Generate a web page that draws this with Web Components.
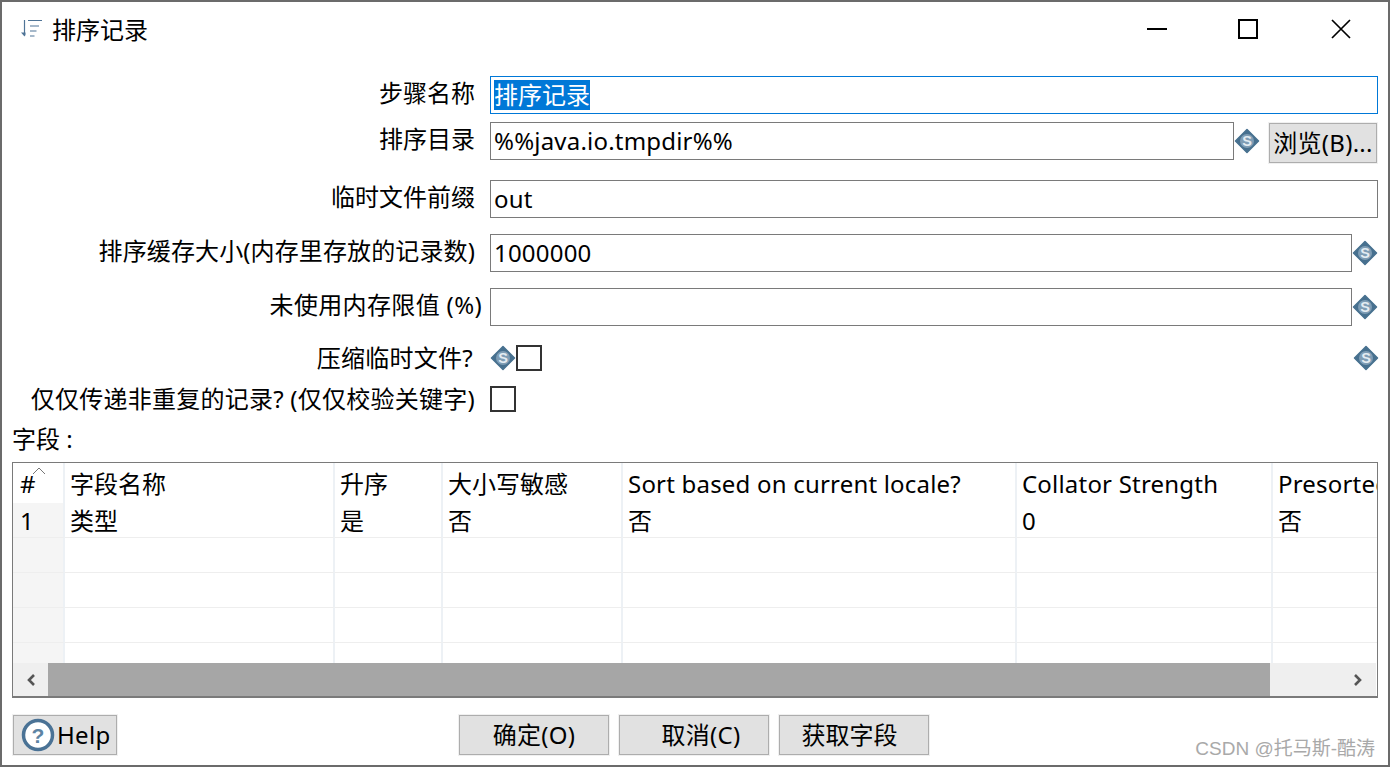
<!DOCTYPE html>
<html lang="zh-CN">
<head>
<meta charset="utf-8">
<title>排序记录</title>
<style>
  html, body { margin: 0; background: #fff; }
  body { font-family: "Noto Sans", "Noto Sans CJK SC", sans-serif; color: #000; }
</style>
</head>
<body>
<sort-dialog>
  <title-bar>排序记录</title-bar>
  <form-row label="步骤名称">
    <text-field focused value="排序记录"></text-field>
  </form-row>
  <form-row label="排序目录" gap="8">
    <text-field value="%%java.io.tmpdir%%"></text-field>
    <var-icon></var-icon>
    <push-button kind="browse">浏览(B)...</push-button>
  </form-row>
  <form-row label="临时文件前缀" gap="17">
    <text-field value="out"></text-field>
  </form-row>
  <form-row label="排序缓存大小(内存里存放的记录数)" gap="16" track="0.12">
    <text-field value="1000000"></text-field>
    <var-icon></var-icon>
  </form-row>
  <form-row label="未使用内存限值 (%)" gap="16" pad="8" track="0.35">
    <text-field></text-field>
    <var-icon></var-icon>
  </form-row>
  <form-row label="压缩临时文件?" gap="19" pad="17" track="0.25" check>
    <var-icon class="lead"></var-icon>
    <check-box></check-box>
    <var-icon class="end"></var-icon>
  </form-row>
  <form-row label="仅仅传递非重复的记录? (仅仅校验关键字)" gap="15" pad="15" track="0.25" check>
    <check-box></check-box>
  </form-row>
  <field-caption>字段 :</field-caption>
  <data-table></data-table>
  <button-bar>
    <push-button kind="help">Help</push-button>
    <push-button>确定(O)</push-button>
    <push-button nudge="14">取消(C)</push-button>
    <push-button nudge="-9">获取字段</push-button>
  </button-bar>
</sort-dialog>

<script>
const UI_FONT = '"Noto Sans", "Noto Sans CJK SC", sans-serif';

function shadow(el, html) {
  el.attachShadow({ mode: "open" }).innerHTML = html;
}

class SortDialog extends HTMLElement {
  constructor() {
    super();
    shadow(this, `
      <style>
        :host {
          display: block;
          position: relative;
          box-sizing: border-box;
          width: 1390px;
          height: 767px;
          border: 2px solid #6b6b6b;
          overflow: hidden;
          background: #fff;
          font-family: ${UI_FONT};
          font-size: 24px;
        }
        .mark {
          position: absolute;
          right: 13px;
          bottom: 3px;
          font: 19px/26px "Liberation Sans", "Noto Sans CJK SC", sans-serif;
          color: #a9a9a9;
          white-space: nowrap;
        }
      </style>
      <slot></slot>
      <div class="mark">CSDN @托马斯-酷涛</div>
    `);
  }
}

class TitleBar extends HTMLElement {
  constructor() {
    super();
    shadow(this, `
      <style>
        :host { display: flex; align-items: center; height: 58px; padding-left: 18px; margin-bottom: 16px; }
        .sort { width: 24px; height: 24px; margin-right: 8px; flex: none; margin-top: -2px; }
        .title { font-size: 24px; line-height: 32px; margin-top: -2px; flex: 1; }
        .win { display: flex; gap: 71px; margin-right: 37px; margin-top: -4px; }
        .win svg { width: 20px; height: 20px; display: block; }
      </style>
      <svg class="sort" viewBox="0 0 24 24" fill="none" stroke="#4f7497" stroke-width="1.2">
        <path d="M4.5 2v14"/>
        <path d="M1 14.5l3.5 4 1-1.5v-2.5z" fill="#4f7497" stroke="none"/>
        <path d="M8 2.5h14M10 8h9M10 13h6.5M10 18h4.5"/>
      </svg>
      <div class="title"><slot></slot></div>
      <div class="win">
        <svg viewBox="0 0 20 20" fill="none" stroke="#000" stroke-width="2"><path d="M0 10h20"/></svg>
        <svg viewBox="0 0 20 20" fill="none" stroke="#000" stroke-width="2"><rect x="1" y="1" width="18" height="18"/></svg>
        <svg viewBox="0 0 20 20" fill="none" stroke="#000" stroke-width="1.7" style="margin-left:2px"><path d="M1 1l18 18M19 1L1 19"/></svg>
      </div>
    `);
  }
}

class FormRow extends HTMLElement {
  constructor() {
    super();
    const pad = this.getAttribute("pad") || "15";
    const gap = this.getAttribute("gap") || "0";
    const track = this.getAttribute("track") || "0";
    const check = this.hasAttribute("check");
    shadow(this, `
      <style>
        :host {
          display: grid;
          grid-template-columns: 488px 1fr;
          margin-top: ${gap}px;
          margin-right: 10px;
          ${check ? "height: 26px;" : ""}
        }
        .label {
          text-align: right;
          padding-right: ${pad}px;
          line-height: 32px;
          letter-spacing: ${track}px;
          margin-top: ${check ? "-3px" : "1px"};
          white-space: nowrap;
          ${check ? "height: 26px;" : ""}
        }
        .fields { display: flex; align-items: flex-start; position: relative; }
      </style>
      <div class="label">${this.getAttribute("label")}</div>
      <div class="fields"><slot></slot></div>
    `);
  }
}

class TextField extends HTMLElement {
  constructor() {
    super();
    const value = this.getAttribute("value") || "";
    const focused = this.hasAttribute("focused");
    shadow(this, `
      <style>
        :host {
          display: block;
          flex: 1;
          box-sizing: border-box;
          height: 38px;
          border: 1px solid ${focused ? "#0078d7" : "#7a7a7a"};
          padding: ${focused ? 3 : 2}px 3px;
          line-height: 32px;
          font-size: 24px;
          white-space: nowrap;
          overflow: hidden;
          letter-spacing: ${focused ? 0 : 0.2}px;
        }
        .sel { background: #0078d7; color: #fff; display: inline-block; line-height: 30px; vertical-align: top; }
      </style>
      <span class="${focused ? "sel" : ""}">${value}</span>
    `);
  }
}

class VarIcon extends HTMLElement {
  constructor() {
    super();
    shadow(this, `
      <style>
        :host { display: block; flex: none; width: 26px; height: 26px; margin-top: 6px; }
        :host(.lead) { position: absolute; left: 0; top: 0; margin: 0; }
        :host(.end) { position: absolute; right: -1px; top: 0; margin: 0; }
        svg { display: block; }
      </style>
      <svg width="26" height="26" viewBox="0 0 26 26">
        <path d="M13 1.5L24.5 13 13 24.5 1.5 13z" fill="#47708f" stroke="#47708f" stroke-width="1.5" stroke-linejoin="round"/>
        <circle cx="13" cy="13" r="7" fill="#7f9db5"/>
        <text x="13" y="18.2" text-anchor="middle" font-family="Liberation Sans, sans-serif" font-weight="700" font-size="14.5" fill="#e4ecf2">S</text>
      </svg>
    `);
  }
}

class CheckBox extends HTMLElement {
  constructor() {
    super();
    shadow(this, `
      <style>
        :host { display: block; box-sizing: border-box; width: 26px; height: 26px; border: 2px solid #333; background: #fff; flex: none; }
      </style>
    `);
  }
  connectedCallback() {
    if (this.previousElementSibling) this.style.marginLeft = "26px";
  }
}

class PushButton extends HTMLElement {
  constructor() {
    super();
    const kind = this.getAttribute("kind");
    const nudge = Number(this.getAttribute("nudge") || 0);
    const help = kind === "help"
      ? `<svg width="34" height="34" viewBox="0 0 34 34">
          <circle cx="17" cy="17" r="14.5" fill="#fff" stroke="#4a7295" stroke-width="3.5"/>
          <text x="17" y="25" text-anchor="middle" font-family="Liberation Sans, sans-serif" font-weight="700" font-size="21" fill="#5d84a4">?</text>
        </svg>`
      : "";
    const width = kind === "help" ? 104 : kind === "browse" ? 108 : 150;
    shadow(this, `
      <style>
        :host {
          display: flex;
          align-items: center;
          justify-content: center;
          flex: none;
          box-sizing: border-box;
          width: ${width}px;
          height: 40px;
          margin-left: ${kind === "browse" ? "9px" : "0"};
          margin-right: ${kind === "browse" ? "1px" : "0"};
          margin-top: ${kind === "browse" ? "1px" : "0"};
          padding-left: ${nudge > 0 ? nudge : 0}px;
          padding-right: ${nudge < 0 ? -nudge : 0}px;
          background: #e1e1e1;
          border: 1px solid #adadad;
          outline: 1px solid #f0f0f0;
          outline-offset: 0;
          font-size: 24px;
          line-height: 32px;
          letter-spacing: ${nudge < 0 ? 0 : 0.3}px;
          white-space: nowrap;
          ${kind === "help" ? "justify-content: flex-start; padding-left: 7px;" : ""}
        }
        svg { display: block; margin-right: 2px; flex: none; }
      </style>
      ${help}<slot></slot>
    `);
  }
}

class FieldCaption extends HTMLElement {
  constructor() {
    super();
    shadow(this, `
      <style>
        :host { display: block; padding-left: 10px; height: 39px; margin-top: 11px; line-height: 32px; font-size: 24px; }
      </style>
      <slot></slot>
    `);
  }
}

class DataTable extends HTMLElement {
  constructor() {
    super();
    const head = ["#", "字段名称", "升序", "大小写敏感", "Sort based on current locale?", "Collator Strength", "Presorted?"];
    const rows = [
      ["1", "类型", "是", "否", "否", "0", "否"],
      ["", "", "", "", "", "", ""],
      ["", "", "", "", "", "", ""],
      ["", "", "", "", "", "", ""],
      ["", "", "", "", "", "", ""],
    ];
    const cell = (t, cls) => `<div class="c ${cls}">${t}</div>`;
    let html = head.map((t, i) => cell(t, "h" + (i === 0 ? " n" : i > 3 ? " latin" : ""))).join("");
    rows.forEach((r) => {
      html += r.map((t, i) => cell(t, i === 0 ? "n idx" : "")).join("");
    });
    shadow(this, `
      <style>
        :host {
          display: block;
          position: relative;
          box-sizing: border-box;
          height: 236px;
          margin: 0 10px;
          border: 1px solid #7a7a7a;
          border-bottom-width: 2px;
          background: #fff;
        }
        .view { height: 200px; overflow: hidden; }
        .grid {
          display: grid;
          grid-template-columns: 52px 270px 108px 180px 394px 256px 200px;
          grid-auto-rows: 35px;
          grid-template-rows: 40px;
          width: 1460px;
        }
        .c {
          box-sizing: border-box;
          padding: 0 0 0 5px;
          border-right: 2px solid #edf1f5;
          border-bottom: 1px solid #eeeeee;
          line-height: 36px;
          white-space: nowrap;
          overflow: hidden;
        }
        .c.h { border-bottom: 0; padding-top: 5px; line-height: 32px; }
        .latin { letter-spacing: 0.2px; }
        .n { padding-left: 7px; }
        .idx { background: #f5f5f5; }
        .caret { position: absolute; left: 19px; top: 4px; width: 14px; height: 8px; }
        .bar { display: flex; height: 33px; background: #efefef; margin-right: 1px; }
        .arrow { width: 35px; display: flex; align-items: center; justify-content: center; flex: none; }
        .arrow.right { width: 106px; padding-left: 69px; box-sizing: border-box; }
        .thumb { flex: 1; background: #a6a6a6; }
      </style>
      <div class="view"><div class="grid">${html}</div></div>
      <svg class="caret" viewBox="0 0 14 8" fill="none" stroke="#777" stroke-width="1"><path d="M1 7l6-6 6 6"/></svg>
      <div class="bar">
        <div class="arrow"><svg width="10" height="12" viewBox="0 0 10 12" fill="none" stroke="#555" stroke-width="2.6"><path d="M8 1L3 6l5 5"/></svg></div>
        <div class="thumb"></div>
        <div class="arrow right"><svg width="10" height="12" viewBox="0 0 10 12" fill="none" stroke="#555" stroke-width="2.6"><path d="M2 1l5 5-5 5"/></svg></div>
      </div>
    `);
  }
}

class ButtonBar extends HTMLElement {
  constructor() {
    super();
    shadow(this, `
      <style>
        :host { display: flex; gap: 10px; padding: 17px 0 0 11px; }
        ::slotted(:first-child) { margin-right: 332px; }
      </style>
      <slot></slot>
    `);
  }
}

customElements.define("sort-dialog", SortDialog);
customElements.define("title-bar", TitleBar);
customElements.define("form-row", FormRow);
customElements.define("text-field", TextField);
customElements.define("var-icon", VarIcon);
customElements.define("check-box", CheckBox);
customElements.define("push-button", PushButton);
customElements.define("field-caption", FieldCaption);
customElements.define("data-table", DataTable);
customElements.define("button-bar", ButtonBar);
</script>
</body>
</html>
